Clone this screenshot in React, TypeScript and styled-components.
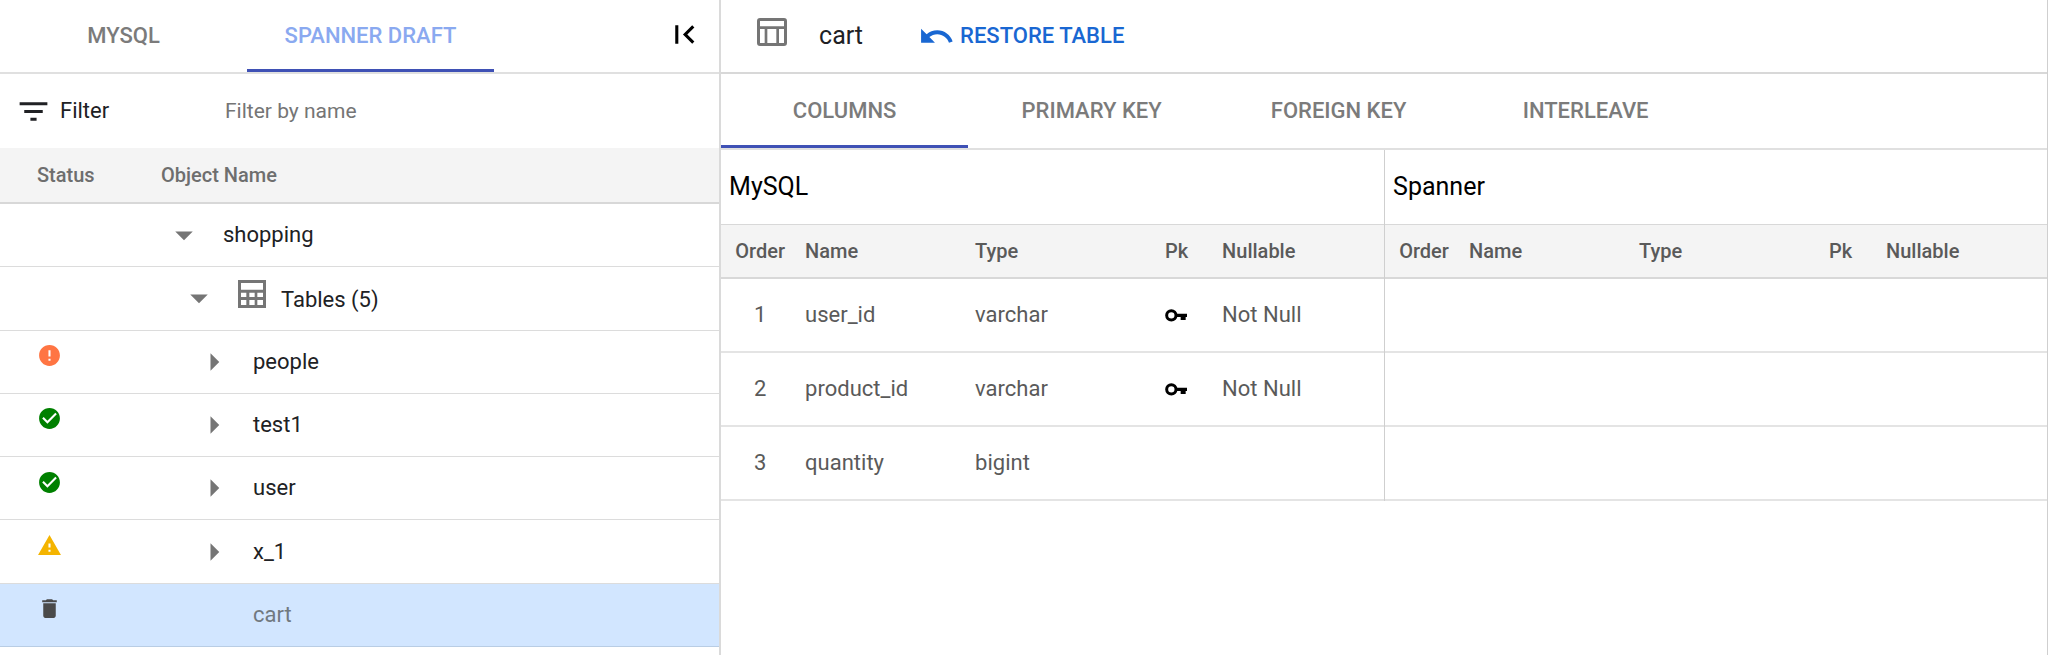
import React, { useState } from 'react';
import styled, { createGlobalStyle } from 'styled-components';

const color = {
  line: '#e0e0e0',
  lineStrong: '#d8d8d8',
  divider: '#cfcfcf',
  head: '#f4f4f4',
  tab: '#7b7b7b',
  tabCurrent: '#8aa9f0',
  indicator: '#3f51b5',
  link: '#1967d2',
  text: '#202124',
  muted: '#5a5a5a',
  icon: '#757575',
  selected: '#d2e6ff',
};

const GlobalStyle = createGlobalStyle`
  * { box-sizing: border-box; }
  body {
    margin: 0;
    background: #fff;
    color: ${color.text};
    font: 400 22px/28px Roboto, "Liberation Sans", sans-serif;
  }
  button, input { font: inherit; color: inherit; }
  svg { display: block; }
`;

const Workspace = styled.div`
  display: grid;
  grid-template-columns: 31fr 57fr;
  min-height: 100vh;
  border-right: 1px solid ${color.divider};
`;

const ObjectExplorer = styled.aside`
  min-width: 0;
  border-right: 2px solid #dadada;
`;

const ObjectDetail = styled.main`
  min-width: 0;
`;

const TabHeader = styled.div`
  display: flex;
  align-items: center;
  justify-content: space-between;
  height: 74px;
  padding-right: 16px;
  border-bottom: 2px solid ${color.line};
`;

const Toolbar = styled.header`
  display: flex;
  align-items: center;
  height: 74px;
  padding-left: 36px;
  border-bottom: 2px solid ${color.lineStrong};
`;

const TabList = styled.div`
  display: flex;
`;

const DetailTabs = styled(TabList)`
  border-bottom: 2px solid ${color.line};
`;

const Tab = styled.button<{ $current?: boolean; $tint?: boolean; $tall?: boolean }>`
  width: 247px;
  height: ${(p) => (p.$tall ? 74 : 72)}px;
  padding: 2px 0 0;
  border: 0;
  border-bottom: 3px solid ${(p) => (p.$current ? color.indicator : 'transparent')};
  background: none;
  color: ${(p) => (p.$tint ? color.tabCurrent : color.tab)};
  font-weight: 500;
  cursor: pointer;
`;

const IconButton = styled.button`
  flex: none;
  padding: 0 0 4px;
  border: 0;
  background: none;
  color: #000;
  cursor: pointer;
`;

const TreeToggle = styled(IconButton)`
  width: 42px;
  height: 42px;
  margin-right: 18px;
  padding: 0;
  color: ${color.icon};
`;

const TreeTogglePlaceholder = styled.span`
  width: 42px;
  margin-right: 18px;
`;

const FilterBar = styled.div`
  display: flex;
  align-items: center;
  height: 74px;
  padding-left: 15px;
`;

const FilterLabel = styled.label`
  display: flex;
  align-items: center;
  gap: 8px;
  width: 210px;
`;

const FilterInput = styled.input`
  flex: 1;
  min-width: 0;
  padding: 0;
  border: 0;
  outline: 0;
  background: none;
  font-size: 21px;
  &::placeholder { color: ${color.icon}; opacity: 1; }
`;

const TreeTable = styled.table`
  width: 100%;
  height: 499px;
  border-collapse: separate;
  border-spacing: 0;
`;

const TreeHeadCell = styled.th<{ $status?: boolean }>`
  width: ${(p) => (p.$status ? '161px' : 'auto')};
  height: 56px;
  padding: 0 0 0 ${(p) => (p.$status ? 37 : 0)}px;
  border-bottom: 2px solid ${color.lineStrong};
  background: ${color.head};
  color: #6e6e6e;
  font-size: 20px;
  font-weight: 500;
  text-align: left;
`;

const TreeRow = styled.tr<{ $selected?: boolean }>`
  background: ${(p) => (p.$selected ? color.selected : 'transparent')};
  color: ${(p) => (p.$selected ? '#71797f' : color.text)};
  td {
    height: 63px;
    border-bottom: 1px solid ${(p) => (p.$selected ? '#b9cde4' : '#dcdcdc')};
  }
`;

const StatusCell = styled.td`
  padding: 0 0 12px 37px;
`;

const NameCell = styled.td`
  padding: 0;
`;

const TreeItem = styled.div<{ $level: number }>`
  display: flex;
  align-items: center;
  padding-left: ${(p) => 2 + p.$level * 15}px;
`;

const GroupName = styled.span`
  display: flex;
  align-items: center;
  gap: 15px;
  padding-top: 4px;
  svg { margin-bottom: 12px; }
`;

const ToolbarIcon = styled.span`
  margin: 0 32px 8px 0;
`;

const ObjectTitle = styled.h1`
  margin: 0 55px 0 0;
  font-size: 25px;
  font-weight: 400;
`;

const RestoreButton = styled.button`
  display: flex;
  align-items: center;
  gap: 5px;
  padding: 0;
  border: 0;
  background: none;
  color: ${color.link};
  font-weight: 500;
  cursor: pointer;
`;

const Comparison = styled.div`
  display: grid;
  grid-template-columns: 1fr 1fr;
`;

const SchemaPanel = styled.section<{ $divided?: boolean }>`
  min-width: 0;
  border-left: ${(p) => (p.$divided ? `1px solid ${color.divider}` : '0')};
`;

const SchemaTitle = styled.h2`
  display: flex;
  align-items: center;
  height: 75px;
  margin: 0;
  padding-left: 8px;
  border-bottom: 1px solid ${color.lineStrong};
  color: #000;
  font-size: 25px;
  font-weight: 400;
`;

const SchemaTable = styled.table`
  width: 100%;
  table-layout: fixed;
  border-collapse: separate;
  border-spacing: 0;
  color: ${color.muted};
  text-align: left;
`;

const SchemaHead = styled.th<{ $width?: number; $center?: boolean }>`
  width: ${(p) => (p.$width ? `${p.$width}px` : 'auto')};
  height: 54px;
  padding: 0 0 0 ${(p) => (p.$center ? 0 : 6)}px;
  border-bottom: 2px solid ${color.lineStrong};
  background: ${color.head};
  font-size: 20px;
  font-weight: 500;
  text-align: ${(p) => (p.$center ? 'center' : 'left')};
`;

const SchemaCell = styled.td<{ $center?: boolean }>`
  height: 74px;
  padding: 0 0 0 ${(p) => (p.$center ? 0 : 6)}px;
  border-bottom: 2px solid #e4e4e4;
  text-align: ${(p) => (p.$center ? 'center' : 'left')};
`;

const glyphs = {
  filter: 'M10 18h4v-2h-4v2zM3 6v2h18V6H3zm3 7h12v-2H6v2z',
  firstPage: 'M18.41 16.59L13.82 12l4.59-4.59L17 6l-6 6 6 6zM6 6h2v12H6z',
  undo: 'M12.5 8c-2.65 0-5.05.99-6.9 2.6L2 7v9h9l-3.62-3.62c1.39-1.16 3.16-1.88 5.12-1.88 3.54 0 6.55 2.31 7.6 5.5l2.37-.78C21.08 11.03 17.15 8 12.5 8z',
  open: 'M7 10l5 5 5-5z',
  closed: 'M10 17l5-5-5-5v10z',
  error: 'M12 2C6.48 2 2 6.48 2 12s4.48 10 10 10 10-4.48 10-10S17.52 2 12 2zm1 15h-2v-2h2v2zm0-4h-2V7h2v6z',
  ok: 'M12 2C6.48 2 2 6.48 2 12s4.48 10 10 10 10-4.48 10-10S17.52 2 12 2zm-2 15l-5-5 1.41-1.41L10 14.17l7.59-7.59L19 8l-9 9z',
  warning: 'M1 21h22L12 2 1 21zm12-3h-2v-2h2v2zm0-4h-2v-4h2v4z',
  deleted: 'M6 19c0 1.1.9 2 2 2h8c1.1 0 2-.9 2-2V7H6v12zM19 4h-3.5l-1-1h-5l-1 1H5v2h14V4z',
};

const Glyph = ({ name, size, fill = 'currentColor' }: { name: keyof typeof glyphs; size: number; fill?: string }) => (
  <svg width={size} height={size} viewBox="0 0 24 24" fill={fill} aria-hidden="true">
    <path d={glyphs[name]} />
  </svg>
);

const TablesIcon = () => (
  <svg width="28" height="28" viewBox="0 0 84 84" fill={color.icon} fillRule="evenodd" aria-hidden="true">
    <path d="M0 0h84v84H0zM9 9v20h66V9zM9 38v13h16V38zM34 38v13h16V38zM58 38v13h17V38zM9 60v15h16V60zM34 60v15h16V60zM58 60v15h17V60z" />
  </svg>
);

const TableIcon = () => (
  <svg width="30" height="28" viewBox="0 0 90 84" fill={color.icon} fillRule="evenodd" aria-hidden="true">
    <path d="M9 0H81a9 9 0 0 1 9 9V75a9 9 0 0 1-9 9H9a9 9 0 0 1-9-9V9a9 9 0 0 1 9-9zM9 9v16h72V9zM9 33v42h14V33zM31 33v42h27V33zM66 33v42h15V33z" />
  </svg>
);

const KeyIcon = () => (
  <svg width="22" height="13" viewBox="0 0 66 39" role="img" aria-label="Primary key">
    <circle cx="19" cy="19" r="14" fill="none" stroke="#000" strokeWidth="9" />
    <path d="M33 14h33v10h-4v9H47v-9H33z" fill="#000" />
  </svg>
);

const statuses = {
  error: { glyph: 'error', fill: '#ff7543' },
  ok: { glyph: 'ok', fill: '#008000' },
  warning: { glyph: 'warning', fill: '#f4b400' },
  deleted: { glyph: 'deleted', fill: '#4a4a4a' },
} as const;

type TreeNode = {
  name: string;
  level: number;
  toggle?: 'open' | 'closed';
  status?: keyof typeof statuses;
  group?: boolean;
};

const tree: TreeNode[] = [
  { name: 'shopping', level: 0, toggle: 'open' },
  { name: 'Tables (5)', level: 1, toggle: 'open', group: true },
  { name: 'people', level: 2, toggle: 'closed', status: 'error' },
  { name: 'test1', level: 2, toggle: 'closed', status: 'ok' },
  { name: 'user', level: 2, toggle: 'closed', status: 'ok' },
  { name: 'x_1', level: 2, toggle: 'closed', status: 'warning' },
  { name: 'cart', level: 2, status: 'deleted' },
];

type Column = { order?: number; name?: string; type?: string; pk?: boolean; nullable?: string };

const sourceColumns: Column[] = [
  { order: 1, name: 'user_id', type: 'varchar', pk: true, nullable: 'Not Null' },
  { order: 2, name: 'product_id', type: 'varchar', pk: true, nullable: 'Not Null' },
  { order: 3, name: 'quantity', type: 'bigint' },
];

const detailTabs = ['COLUMNS', 'PRIMARY KEY', 'FOREIGN KEY', 'INTERLEAVE'];

const Schema = ({ title, columns, divided }: { title: string; columns: Column[]; divided?: boolean }) => (
  <SchemaPanel $divided={divided}>
    <SchemaTitle>{title}</SchemaTitle>
    <SchemaTable>
      <thead>
        <tr>
          <SchemaHead $width={78} $center>Order</SchemaHead>
          <SchemaHead $width={170}>Name</SchemaHead>
          <SchemaHead $width={190}>Type</SchemaHead>
          <SchemaHead $width={57}>Pk</SchemaHead>
          <SchemaHead>Nullable</SchemaHead>
        </tr>
      </thead>
      <tbody>
        {columns.map((column, index) => (
          <tr key={index}>
            <SchemaCell $center>{column.order}</SchemaCell>
            <SchemaCell>{column.name}</SchemaCell>
            <SchemaCell>{column.type}</SchemaCell>
            <SchemaCell>{column.pk && <KeyIcon />}</SchemaCell>
            <SchemaCell>{column.nullable}</SchemaCell>
          </tr>
        ))}
      </tbody>
    </SchemaTable>
  </SchemaPanel>
);

export default function App() {
  const [filter, setFilter] = useState('');
  const [tab, setTab] = useState(detailTabs[0]);
  const visible = tree.filter((node) => node.level < 2 || node.name.includes(filter));

  return (
    <>
      <GlobalStyle />
      <Workspace>
        <ObjectExplorer>
          <TabHeader>
            <TabList role="tablist">
              <Tab role="tab" aria-selected={false}>MYSQL</Tab>
              <Tab role="tab" aria-selected $current $tint>SPANNER DRAFT</Tab>
            </TabList>
            <IconButton aria-label="Collapse panel"><Glyph name="firstPage" size={37} /></IconButton>
          </TabHeader>
          <FilterBar>
            <FilterLabel htmlFor="object-filter"><Glyph name="filter" size={37} />Filter</FilterLabel>
            <FilterInput
              id="object-filter"
              placeholder="Filter by name"
              value={filter}
              onChange={(event) => setFilter(event.target.value)}
            />
          </FilterBar>
          <TreeTable>
            <thead>
              <tr>
                <TreeHeadCell $status>Status</TreeHeadCell>
                <TreeHeadCell>Object Name</TreeHeadCell>
              </tr>
            </thead>
            <tbody>
              {visible.map((node) => (
                <TreeRow key={node.name} $selected={node.status === 'deleted'}>
                  <StatusCell>
                    {node.status && (
                      <Glyph name={statuses[node.status].glyph} size={25} fill={statuses[node.status].fill} />
                    )}
                  </StatusCell>
                  <NameCell>
                    <TreeItem $level={node.level}>
                      {node.toggle ? (
                        <TreeToggle aria-label={`Toggle ${node.name}`} aria-expanded={node.toggle === 'open'}>
                          <Glyph name={node.toggle} size={42} />
                        </TreeToggle>
                      ) : (
                        <TreeTogglePlaceholder />
                      )}
                      {node.group ? <GroupName><TablesIcon />{node.name}</GroupName> : node.name}
                    </TreeItem>
                  </NameCell>
                </TreeRow>
              ))}
            </tbody>
          </TreeTable>
        </ObjectExplorer>
        <ObjectDetail>
          <Toolbar>
            <ToolbarIcon><TableIcon /></ToolbarIcon>
            <ObjectTitle>cart</ObjectTitle>
            <RestoreButton><Glyph name="undo" size={37} />RESTORE TABLE</RestoreButton>
          </Toolbar>
          <DetailTabs role="tablist">
            {detailTabs.map((label) => (
              <Tab
                key={label}
                role="tab"
                aria-selected={tab === label}
                $current={tab === label}
                $tall
                onClick={() => setTab(label)}
              >
                {label}
              </Tab>
            ))}
          </DetailTabs>
          <Comparison>
            <Schema title="MySQL" columns={sourceColumns} />
            <Schema title="Spanner" columns={sourceColumns.map(() => ({}))} divided />
          </Comparison>
        </ObjectDetail>
      </Workspace>
    </>
  );
}
